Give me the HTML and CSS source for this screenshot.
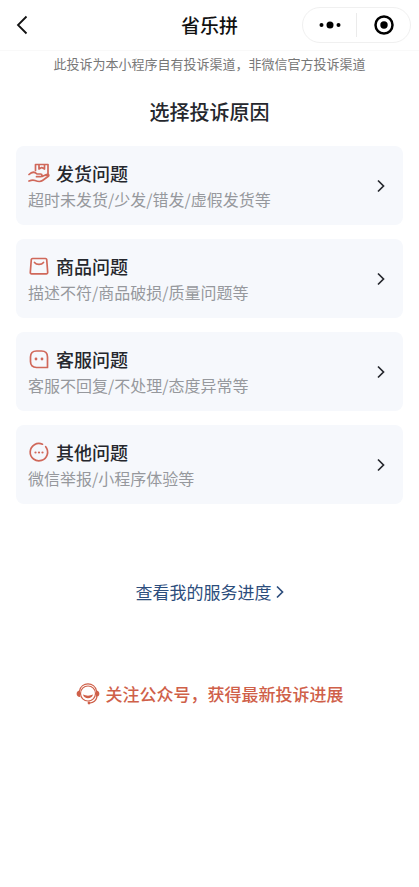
FILE: index.html
```html
<!DOCTYPE html>
<html lang="zh-CN">
<head>
<meta charset="utf-8">
<meta name="viewport" content="width=device-width, initial-scale=1">
<title>省乐拼</title>
<link rel="stylesheet" href="styles.css">
</head>
<body>
<header class="navbar">
  <button class="back" type="button" aria-label="返回">
    <svg width="12" height="20" viewBox="0 0 12 20"><path d="M10.500 1.500 2 10l8.500 8.500"/></svg>
  </button>
  <h1 class="app-name">省乐拼</h1>
  <div class="capsule">
    <button type="button" aria-label="更多">
      <svg width="24" height="24" viewBox="0 0 24 24"><circle cx="3.500" cy="12" r="2"/><circle cx="12" cy="12" r="3.500"/><circle cx="20.500" cy="12" r="2"/></svg>
    </button>
    <button type="button" aria-label="关闭">
      <svg width="24" height="24" viewBox="0 0 24 24"><circle class="ring" cx="12" cy="12" r="8.500"/><circle cx="12" cy="12" r="3.700"/></svg>
    </button>
  </div>
</header>
<main class="page">
  <p class="notice">此投诉为本小程序自有投诉渠道，非微信官方投诉渠道</p>
  <h2 class="heading">选择投诉原因</h2>
  <nav class="reasons">
    <a class="card" href="#delivery">
      <span class="card-text">
        <span class="card-title">
          <svg class="icon" width="22" height="22" viewBox="0 0 22 22"><path d="M7.500 8.500V2.500H20V13.500H18M11 2.500V7L13.700 5.500L16.500 7V2.500"/><path d="M1 12.500C4 9.500 7 10 9 12H12.500C14.500 12 14.500 14.700 12.500 14.700H8.500M14 14.500L18.500 12.500C20.500 11.700 21.500 13.500 20 14.500L14.500 18.500C12.500 20 9.500 19.500 7 18.500C5 17.700 3.500 18 1 19"/></svg>
          发货问题
        </span>
        <span class="card-desc">超时未发货/少发/错发/虚假发货等</span>
      </span>
      <svg class="arrow" width="8" height="14" viewBox="0 0 8 14"><path d="m1 1.500 5.500 5.500L1 12.500"/></svg>
    </a>
    <a class="card" href="#goods">
      <span class="card-text">
        <span class="card-title">
          <svg class="icon" width="22" height="22" viewBox="0 0 22 22"><path d="M4.500 3.500H17.500Q18.500 3.500 18.700 4.500L19.700 17.500Q19.700 18.800 18.500 18.800H3.500Q2.300 18.800 2.300 17.500L3.300 4.500Q3.500 3.500 4.500 3.500ZM6.500 7.500C8.500 10 13.500 10 15.500 7.500"/></svg>
          商品问题
        </span>
        <span class="card-desc">描述不符/商品破损/质量问题等</span>
      </span>
      <svg class="arrow" width="8" height="14" viewBox="0 0 8 14"><path d="m1 1.500 5.500 5.500L1 12.500"/></svg>
    </a>
    <a class="card" href="#service">
      <span class="card-text">
        <span class="card-title">
          <svg class="icon" width="22" height="22" viewBox="0 0 22 22"><path d="M8.500 3H13.500Q19.500 3 19.500 9V19.500H8.500Q2.500 19.500 2.500 13.500V9Q2.500 3 8.500 3Z"/><g class="dots"><circle cx="8" cy="11" r="1.400"/><circle cx="14" cy="11" r="1.400"/></g></svg>
          客服问题
        </span>
        <span class="card-desc">客服不回复/不处理/态度异常等</span>
      </span>
      <svg class="arrow" width="8" height="14" viewBox="0 0 8 14"><path d="m1 1.500 5.500 5.500L1 12.500"/></svg>
    </a>
    <a class="card" href="#other">
      <span class="card-text">
        <span class="card-title">
          <svg class="icon" width="22" height="22" viewBox="0 0 22 22"><path d="M14.500 3.200A8.700 8.700 0 1 0 17.700 5.700"/><g class="dots"><circle cx="7.500" cy="11.500" r="1.100"/><circle cx="11" cy="11.500" r="1.100"/><circle cx="14.500" cy="11.500" r="1.100"/></g></svg>
          其他问题
        </span>
        <span class="card-desc">微信举报/小程序体验等</span>
      </span>
      <svg class="arrow" width="8" height="14" viewBox="0 0 8 14"><path d="m1 1.500 5.500 5.500L1 12.500"/></svg>
    </a>
  </nav>
  <a class="progress" href="#progress">查看我的服务进度
    <svg class="arrow" width="8" height="14" viewBox="0 0 8 14"><path d="m1 1.500 5.500 5.500L1 12.500"/></svg>
  </a>
  <a class="follow" href="#follow">
    <svg class="headset" width="24" height="22" viewBox="0 0 24 22"><circle cx="12" cy="10.500" r="7.500"/><path d="M3.500 8C5 -1.500 19 -1.500 20.500 8M21 14C20 17.500 17.500 19.700 14 20"/><path class="solid" d="M4 7.500V14C-.5 14-.5 7.500 4 7.500ZM20 7.500V14C24.500 14 24.500 7.500 20 7.500ZM7 11.500C10 13 14 13 17 11.500C16 16.500 8 16.500 7 11.500Z"/><circle class="solid" cx="13" cy="20" r="1.400"/></svg>
    关注公众号，获得最新投诉进展
  </a>
</main>
</body>
</html>
```
FILE: styles.css
```css
* {
  box-sizing: border-box;
}

body {
  margin: 0;
  background: #fff;
  color: #25272d;
  font-family: "Noto Sans CJK SC", sans-serif;
}

h1, h2, p {
  margin: 0;
}

a {
  color: inherit;
  text-decoration: none;
}

button {
  padding: 0;
  border: 0;
  background: none;
}

svg {
  display: block;
  flex: none;
}

.navbar {
  display: grid;
  grid-template-columns: 1fr auto 1fr;
  align-items: center;
  height: 51px;
  padding: 0 8px;
  border-bottom: 1px solid #f9f9f9;
}

.back {
  justify-self: start;
  padding: 0 8px;
}

.back path {
  fill: none;
  stroke: #111;
  stroke-width: 1.8;
}

.app-name {
  color: #111;
  font-size: 19px;
  font-weight: 500;
  line-height: 28px;
}

.capsule {
  display: flex;
  align-items: center;
  justify-self: end;
  width: 109px;
  height: 36px;
  border: 1px solid #f0f0f0;
  border-radius: 18px;
}

.capsule button {
  display: flex;
  flex: 1;
  justify-content: center;
}

.capsule button + button {
  border-left: 1px solid #ebebeb;
}

.ring {
  fill: none;
  stroke: #000;
  stroke-width: 2.5;
}

.page {
  display: flex;
  flex-direction: column;
  align-items: center;
  padding: 3px 16px 32px;
}

.notice {
  color: #777;
  font-size: 13px;
  line-height: 20px;
}

.heading {
  margin-top: 22px;
  font-size: 20px;
  font-weight: 500;
  line-height: 32px;
}

.reasons {
  display: grid;
  gap: 14px;
  width: 100%;
  margin-top: 18px;
}

.card {
  display: flex;
  align-items: center;
  justify-content: space-between;
  padding: 14px 18px 13px 12px;
  border-radius: 8px;
  background: #f6f8fc;
}

.card-title {
  display: flex;
  align-items: center;
  gap: 6px;
  font-size: 18px;
  font-weight: 500;
  line-height: 26px;
}

.card-desc {
  display: block;
  color: #96989d;
  font-size: 16px;
  line-height: 26px;
}

.icon {
  fill: none;
  stroke: #d0685a;
  stroke-width: 1.7;
  stroke-linejoin: round;
  stroke-linecap: round;
}

.dots {
  fill: #d0685a;
  stroke: none;
}

.arrow {
  fill: none;
  stroke: currentColor;
  stroke-width: 1.7;
}

.progress {
  display: flex;
  align-items: center;
  gap: 4px;
  margin-top: 74px;
  color: #2c4d7c;
  font-size: 17px;
  line-height: 28px;
}

.follow {
  display: flex;
  align-items: center;
  gap: 6px;
  margin-top: 74px;
  color: #cf6049;
  font-size: 17px;
  font-weight: 500;
  line-height: 28px;
}

.headset {
  fill: none;
  stroke: #cf6049;
  stroke-width: 1.2;
}

.solid {
  fill: #cf6049;
  stroke: none;
}
```
